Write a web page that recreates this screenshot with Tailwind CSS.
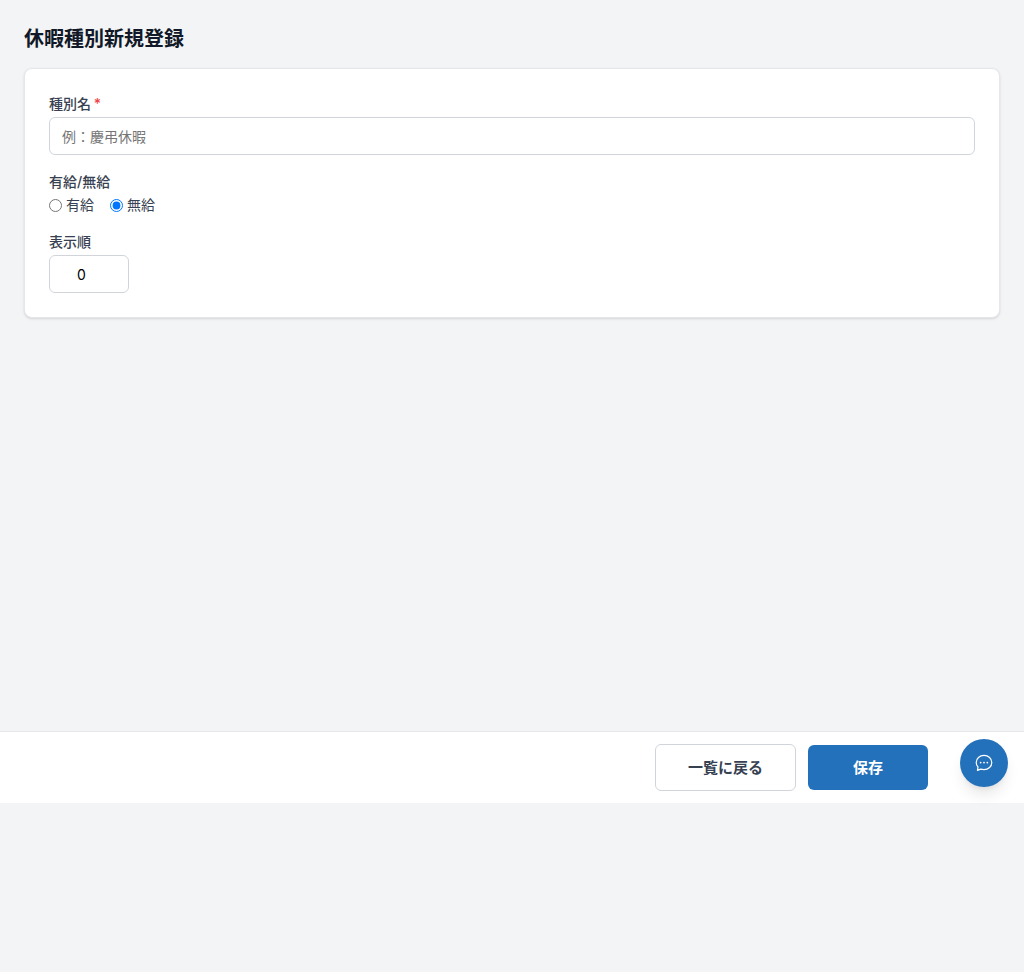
<!DOCTYPE html>
<html lang="ja">
<head>
  <meta charset="UTF-8">
  <meta name="viewport" content="width=device-width, initial-scale=1.0">
  <title>休暇種別新規登録</title>
  <script src="https://cdn.jsdelivr.net/npm/@tailwindcss/browser@4"></script>
</head>
<body class="relative min-h-[972px] bg-[#f3f4f6] font-['Inter','Noto_Sans_CJK_JP',sans-serif]">
  <!-- Main Content -->
  <main class="h-[731px] p-6">
    <h1 class="mb-4 h-7 text-xl leading-[30px] font-bold text-[#111827]">休暇種別新規登録</h1>

    <form class="rounded-lg border border-[#e5e7eb] bg-white p-6 shadow">
      <div class="mb-4">
        <label for="name" class="mb-1 block h-5 text-sm leading-[22px] font-medium text-[#374151]">種別名 <span class="-ml-px text-[#ef4444]">*</span></label>
        <input id="name" type="text" placeholder="例：慶弔休暇" class="block h-[38px] w-full rounded-md border border-[#d1d5db] bg-white px-3 text-sm placeholder:text-[#757575] focus:outline-none">
      </div>

      <div class="mb-4">
        <p class="mb-1 h-5 text-sm leading-[22px] font-medium text-[#374151]">有給/無給</p>
        <div class="flex h-5 items-center gap-4 text-sm text-[#374151]">
          <label class="flex items-center gap-1">
            <input type="radio" name="paid" class="m-0 size-[13px]">
            <span>有給</span>
          </label>
          <label class="flex items-center gap-1">
            <input type="radio" name="paid" checked class="m-0 size-[13px]">
            <span>無給</span>
          </label>
        </div>
      </div>

      <div>
        <label for="order" class="mb-1 block h-5 text-sm leading-[22px] font-medium text-[#374151]">表示順</label>
        <input id="order" type="number" value="0" class="block h-[38px] w-20 rounded-md border border-[#d1d5db] bg-white px-3 text-center text-sm text-black focus:outline-none">
      </div>
    </form>
  </main>

  <!-- Footer -->
  <footer class="flex h-[72px] items-center justify-end gap-3 border-t border-[#e5e7eb] bg-white pr-24">
    <button class="h-[47px] w-[141px] rounded-md border border-[#d1d5db] bg-white pt-0.5 text-[15px] font-bold text-[#374151]">一覧に戻る</button>
    <button class="h-[45px] w-[120px] rounded-md bg-[#2471bb] pt-0.5 text-[15px] font-bold text-white">保存</button>
  </footer>

  <!-- Chat button -->
  <button class="absolute top-[739px] left-[960px] flex size-12 items-center justify-center rounded-full bg-[#2471bb] shadow-lg" aria-label="chat">
    <svg class="size-5" viewBox="0 0 18 18" fill="none" stroke="white" stroke-width="1.1" stroke-linejoin="round">
      <path d="M9 2.2c-4 0-7 2.7-7 6.3 0 1.6.6 3 1.6 4.1l-.5 3 3-1.1c.9.3 1.9.4 2.9.4 4 0 7-2.8 7-6.4S13 2.2 9 2.2z"/>
      <circle cx="6" cy="8.6" r=".8" fill="white" stroke="none"/>
      <circle cx="9" cy="8.6" r=".8" fill="white" stroke="none"/>
      <circle cx="12" cy="8.6" r=".8" fill="white" stroke="none"/>
    </svg>
  </button>
</body>
</html>
